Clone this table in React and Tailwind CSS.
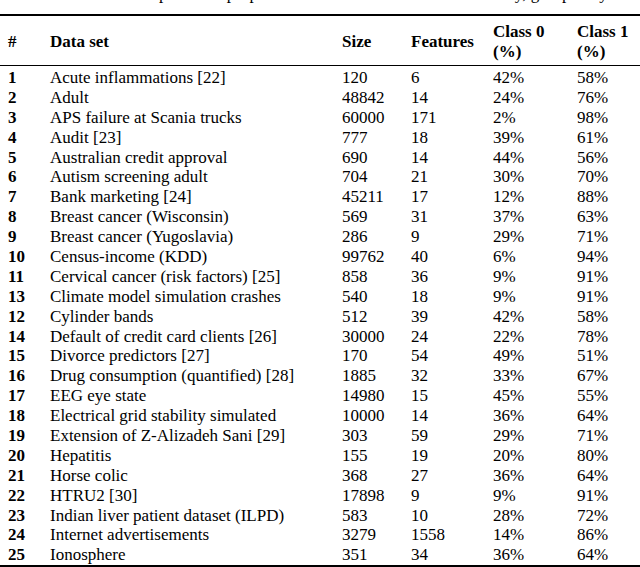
const rows = [
  ["1", "Acute inflammations [22]", "120", "6", "42%", "58%"],
  ["2", "Adult", "48842", "14", "24%", "76%"],
  ["3", "APS failure at Scania trucks", "60000", "171", "2%", "98%"],
  ["4", "Audit [23]", "777", "18", "39%", "61%"],
  ["5", "Australian credit approval", "690", "14", "44%", "56%"],
  ["6", "Autism screening adult", "704", "21", "30%", "70%"],
  ["7", "Bank marketing [24]", "45211", "17", "12%", "88%"],
  ["8", "Breast cancer (Wisconsin)", "569", "31", "37%", "63%"],
  ["9", "Breast cancer (Yugoslavia)", "286", "9", "29%", "71%"],
  ["10", "Census-income (KDD)", "99762", "40", "6%", "94%"],
  ["11", "Cervical cancer (risk factors) [25]", "858", "36", "9%", "91%"],
  ["13", "Climate model simulation crashes", "540", "18", "9%", "91%"],
  ["12", "Cylinder bands", "512", "39", "42%", "58%"],
  ["14", "Default of credit card clients [26]", "30000", "24", "22%", "78%"],
  ["15", "Divorce predictors [27]", "170", "54", "49%", "51%"],
  ["16", "Drug consumption (quantified) [28]", "1885", "32", "33%", "67%"],
  ["17", "EEG eye state", "14980", "15", "45%", "55%"],
  ["18", "Electrical grid stability simulated", "10000", "14", "36%", "64%"],
  ["19", "Extension of Z-Alizadeh Sani [29]", "303", "59", "29%", "71%"],
  ["20", "Hepatitis", "155", "19", "20%", "80%"],
  ["21", "Horse colic", "368", "27", "36%", "64%"],
  ["22", "HTRU2 [30]", "17898", "9", "9%", "91%"],
  ["23", "Indian liver patient dataset (ILPD)", "583", "10", "28%", "72%"],
  ["24", "Internet advertisements", "3279", "1558", "14%", "86%"],
  ["25", "Ionosphere", "351", "34", "36%", "64%"],
];

const cols = "grid grid-cols-[50px_292px_69px_82px_84px_1fr]";

export default function App() {
  return (
    <div
      className="w-[640px] h-[567px] overflow-hidden bg-white text-black text-[17px] leading-[20px]"
      style={{ fontFamily: '"Liberation Serif", "Times New Roman", serif' }}
    >
      {/* caption, mostly cut off above the crop */}
      <div className="h-[14px] overflow-hidden">
        <div className="mt-[-16px] whitespace-nowrap pl-[60px]">
          Table 1 Description and properties of the data sets used in this study, grouped by
        </div>
      </div>

      <div className="border-t-2 border-black" />

      {/* header */}
      <div className={`${cols} h-[49px] items-center font-bold pt-[3px]`}>
        <div className="pl-[8px]">#</div>
        <div>Data set</div>
        <div>Size</div>
        <div>Features</div>
        <div>
          Class 0
          <br />
          (%)
        </div>
        <div>
          Class 1
          <br />
          (%)
        </div>
      </div>

      <div className="border-t-[1.5px] border-black" />

      {/* body */}
      <div className="flex flex-col pt-[2px]">
        {rows.map((r) => (
          <div key={r[0]} className={`${cols} h-[19.9px] items-center`}>
            <div className="pl-[8px] font-bold">{r[0]}</div>
            <div className="whitespace-nowrap">{r[1]}</div>
            <div>{r[2]}</div>
            <div>{r[3]}</div>
            <div>{r[4]}</div>
            <div>{r[5]}</div>
          </div>
        ))}
      </div>

      <div className="border-t-2 border-black" />
    </div>
  );
}
